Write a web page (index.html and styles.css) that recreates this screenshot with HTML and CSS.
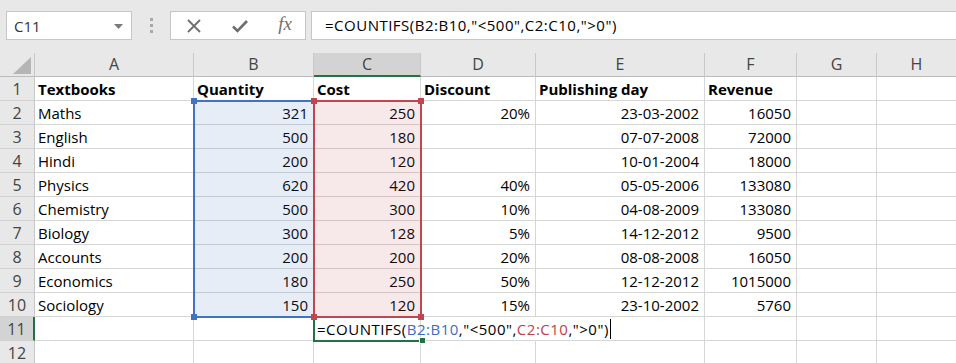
FILE: index.html
```html
<!DOCTYPE html>
<html lang="en">
<head>
    <meta charset="UTF-8">
    <title>Textbooks - COUNTIFS</title>
    <link rel="stylesheet" href="styles.css">
</head>
<body>
    <!-- Formula bar -->
    <div class="formula-bar">
        <div class="name-box">
            <span>C11</span>
            <svg class="drop" width="9" height="5" viewBox="0 0 9 5"><path d="M0 0h9L4.5 5z" fill="#7a7a7a"/></svg>
        </div>
        <div class="grip"><i></i><i></i><i></i></div>
        <div class="fx-buttons">
            <svg width="16" height="16" viewBox="0 0 16 16"><path d="M2 2l12 12M14 2L2 14" stroke="#6e6e6e" stroke-width="1.8" fill="none"/></svg>
            <svg width="18" height="16" viewBox="0 0 18 16"><path d="M2 8.5l4.5 4.5L16 3" stroke="#6e6e6e" stroke-width="2.6" fill="none"/></svg>
            <span class="fx">fx</span>
        </div>
        <div class="formula-input">=COUNTIFS(B2:B10,"&lt;500",C2:C10,"&gt;0")</div>
    </div>

    <!-- Worksheet -->
    <div class="sheet">
        <div class="corner"><svg width="18" height="17" viewBox="0 0 18 17"><path d="M18 0v17H0z" fill="#b5b5b5"/></svg></div>
        <div class="ch">A</div>
        <div class="ch">B</div>
        <div class="ch sel-col">C</div>
        <div class="ch">D</div>
        <div class="ch">E</div>
        <div class="ch">F</div>
        <div class="ch">G</div>
        <div class="ch">H</div>

        <div class="rh">1</div>
        <div class="cell b">Textbooks</div>
        <div class="cell b">Quantity</div>
        <div class="cell b">Cost</div>
        <div class="cell b">Discount</div>
        <div class="cell b">Publishing day</div>
        <div class="cell b">Revenue</div>
        <div class="cell"></div>
        <div class="cell"></div>

        <div class="rh">2</div>
        <div class="cell">Maths</div>
        <div class="cell n">321</div>
        <div class="cell n">250</div>
        <div class="cell n">20%</div>
        <div class="cell n">23-03-2002</div>
        <div class="cell n">16050</div>
        <div class="cell"></div>
        <div class="cell"></div>

        <div class="rh">3</div>
        <div class="cell">English</div>
        <div class="cell n">500</div>
        <div class="cell n">180</div>
        <div class="cell n"></div>
        <div class="cell n">07-07-2008</div>
        <div class="cell n">72000</div>
        <div class="cell"></div>
        <div class="cell"></div>

        <div class="rh">4</div>
        <div class="cell">Hindi</div>
        <div class="cell n">200</div>
        <div class="cell n">120</div>
        <div class="cell n"></div>
        <div class="cell n">10-01-2004</div>
        <div class="cell n">18000</div>
        <div class="cell"></div>
        <div class="cell"></div>

        <div class="rh">5</div>
        <div class="cell">Physics</div>
        <div class="cell n">620</div>
        <div class="cell n">420</div>
        <div class="cell n">40%</div>
        <div class="cell n">05-05-2006</div>
        <div class="cell n">133080</div>
        <div class="cell"></div>
        <div class="cell"></div>

        <div class="rh">6</div>
        <div class="cell">Chemistry</div>
        <div class="cell n">500</div>
        <div class="cell n">300</div>
        <div class="cell n">10%</div>
        <div class="cell n">04-08-2009</div>
        <div class="cell n">133080</div>
        <div class="cell"></div>
        <div class="cell"></div>

        <div class="rh">7</div>
        <div class="cell">Biology</div>
        <div class="cell n">300</div>
        <div class="cell n">128</div>
        <div class="cell n">5%</div>
        <div class="cell n">14-12-2012</div>
        <div class="cell n">9500</div>
        <div class="cell"></div>
        <div class="cell"></div>

        <div class="rh">8</div>
        <div class="cell">Accounts</div>
        <div class="cell n">200</div>
        <div class="cell n">200</div>
        <div class="cell n">20%</div>
        <div class="cell n">08-08-2008</div>
        <div class="cell n">16050</div>
        <div class="cell"></div>
        <div class="cell"></div>

        <div class="rh">9</div>
        <div class="cell">Economics</div>
        <div class="cell n">180</div>
        <div class="cell n">250</div>
        <div class="cell n">50%</div>
        <div class="cell n">12-12-2012</div>
        <div class="cell n">1015000</div>
        <div class="cell"></div>
        <div class="cell"></div>

        <div class="rh">10</div>
        <div class="cell">Sociology</div>
        <div class="cell n">150</div>
        <div class="cell n">120</div>
        <div class="cell n">15%</div>
        <div class="cell n">23-10-2002</div>
        <div class="cell n">5760</div>
        <div class="cell"></div>
        <div class="cell"></div>

        <div class="rh sel-row">11</div>
        <div class="cell"></div>
        <div class="cell"></div>
        <div class="cell editing">=COUNTIFS(<span class="ref-blue">B2:B10</span>,"&lt;500",<span class="ref-red">C2:C10</span>,"&gt;0")<span class="caret"></span></div>
        <div class="cell spill"></div>
        <div class="cell"></div>
        <div class="cell"></div>
        <div class="cell"></div>
        <div class="cell"></div>

        <div class="rh">12</div>
        <div class="cell"></div>
        <div class="cell"></div>
        <div class="cell"></div>
        <div class="cell"></div>
        <div class="cell"></div>
        <div class="cell"></div>
        <div class="cell"></div>
        <div class="cell"></div>

        <!-- overlays -->
        <div class="active-cell"><span class="fill-handle"></span></div>
        <div class="range range-blue">
            <span class="handle tl"></span><span class="handle bl"></span>
        </div>
        <div class="range range-red">
            <span class="handle tl"></span><span class="handle tr"></span>
            <span class="handle bl"></span><span class="handle br"></span>
        </div>
    </div>
</body>
</html>
```

FILE: styles.css
```css
/* Base */
* {
    margin: 0;
    padding: 0;
    box-sizing: border-box;
}

body {
    background: #e8e8e8;
    overflow: hidden;
    font-family: "Open Sans", Lato, sans-serif;
    color: #000;
}

/* Formula bar */
.formula-bar {
    display: flex;
    align-items: flex-start;
    height: 53px;
    padding: 11px 0 0 6px;
}

.name-box {
    width: 126px;
    height: 29px;
    background: #fff;
    border: 1px solid #c6c6c6;
    display: flex;
    align-items: center;
    justify-content: space-between;
    padding: 0 8px 0 7px;
    font-size: 15px;
    color: #333;
}

.drop {
    margin-top: 1px;
}

.grip {
    width: 38px;
    height: 29px;
    display: flex;
    flex-direction: column;
    align-items: center;
    justify-content: center;
    gap: 3px;
}

.grip i {
    display: block;
    width: 3px;
    height: 3px;
    background: #a8a8a8;
}

.fx-buttons {
    width: 136px;
    height: 29px;
    background: #fff;
    border: 1px solid #c6c6c6;
    display: flex;
    align-items: center;
    justify-content: space-between;
    padding: 0 13px 0 15px;
}

.fx {
    font-family: "Liberation Serif", serif;
    font-style: italic;
    font-size: 19px;
    color: #707070;
    margin-top: -3px;
}

.formula-input {
    flex: 1;
    height: 29px;
    margin-left: 5px;
    margin-right: -4px;
    background: #fff;
    border: 1px solid #c6c6c6;
    padding: 0 0 0 13px;
    font-size: 15px;
    letter-spacing: 0.5px;
    line-height: 27px;
    white-space: nowrap;
}

/* Worksheet grid */
.sheet {
    position: relative;
    display: grid;
    grid-template-columns: 35px 159px 120px 107px 115px 169px 92px 80px 80px;
    grid-auto-rows: 24px;
    background: #fff;
}

.corner,
.ch,
.rh {
    background: #e8e8e8;
    color: #444;
    font-size: 16px;
    border-right: 1px solid #c8c8c8;
    border-bottom: 1px solid #bcbcbc;
}

.corner {
    display: flex;
    align-items: flex-end;
    justify-content: flex-end;
    padding: 0 3px 2px 0;
}

.ch {
    text-align: center;
    line-height: 22px;
}

.rh {
    text-align: center;
    line-height: 24px;
    border-bottom-color: #d0d0d0;
}

.sel-col {
    background: #d3d3d3;
    border-bottom: 2px solid #217346;
}

.sel-row {
    background: #d3d3d3;
    border-right: 2px solid #217346;
}

.cell {
    border-right: 1px solid #d6d6d6;
    border-bottom: 1px solid #d6d6d6;
    padding: 1px 3px 0 3px;
    font-size: 15px;
    line-height: 23px;
    white-space: nowrap;
    overflow: hidden;
}

.cell.b {
    font-weight: bold;
}

.cell.n {
    text-align: right;
    padding-right: 5px;
}

/* Cell being edited spills over its neighbours */
.cell.editing {
    overflow: visible;
    letter-spacing: 0.5px;
    position: relative;
    z-index: 1;
}

.cell.spill {
    border-right-color: transparent;
}

.ref-blue {
    color: #3d6dbf;
}

.ref-red {
    color: #bf3f48;
}

.caret {
    display: inline-block;
    width: 1px;
    height: 20px;
    margin-left: 1px;
    background: #000;
    vertical-align: -4px;
}

/* Overlays */
.active-cell,
.range {
    position: absolute;
    inset: -1px;
}

.active-cell {
    grid-column: 4 / 5;
    grid-row: 12 / 13;
    border: 2px solid #217346;
    border-right: none;
    z-index: 2;
}

.fill-handle {
    position: absolute;
    right: -4px;
    bottom: -4px;
    width: 7px;
    height: 7px;
    background: #217346;
    border: 1px solid #fff;
}

.range {
    grid-row: 3 / 12;
    z-index: 3;
}

.range-blue {
    grid-column: 3 / 4;
    border: 2px solid #4372c2;
    background: rgba(66, 114, 196, 0.13);
}

.range-red {
    grid-column: 4 / 5;
    border: 2px solid #c0474f;
    background: rgba(192, 71, 79, 0.12);
}

.handle {
    position: absolute;
    width: 6px;
    height: 6px;
}

.range-blue .handle {
    background: #4372c2;
}

.range-red .handle {
    background: #c0474f;
}

.handle.tl { left: -4px; top: -4px; }
.handle.tr { right: -4px; top: -4px; }
.handle.bl { left: -4px; bottom: -4px; }
.handle.br { right: -4px; bottom: -4px; }
```
